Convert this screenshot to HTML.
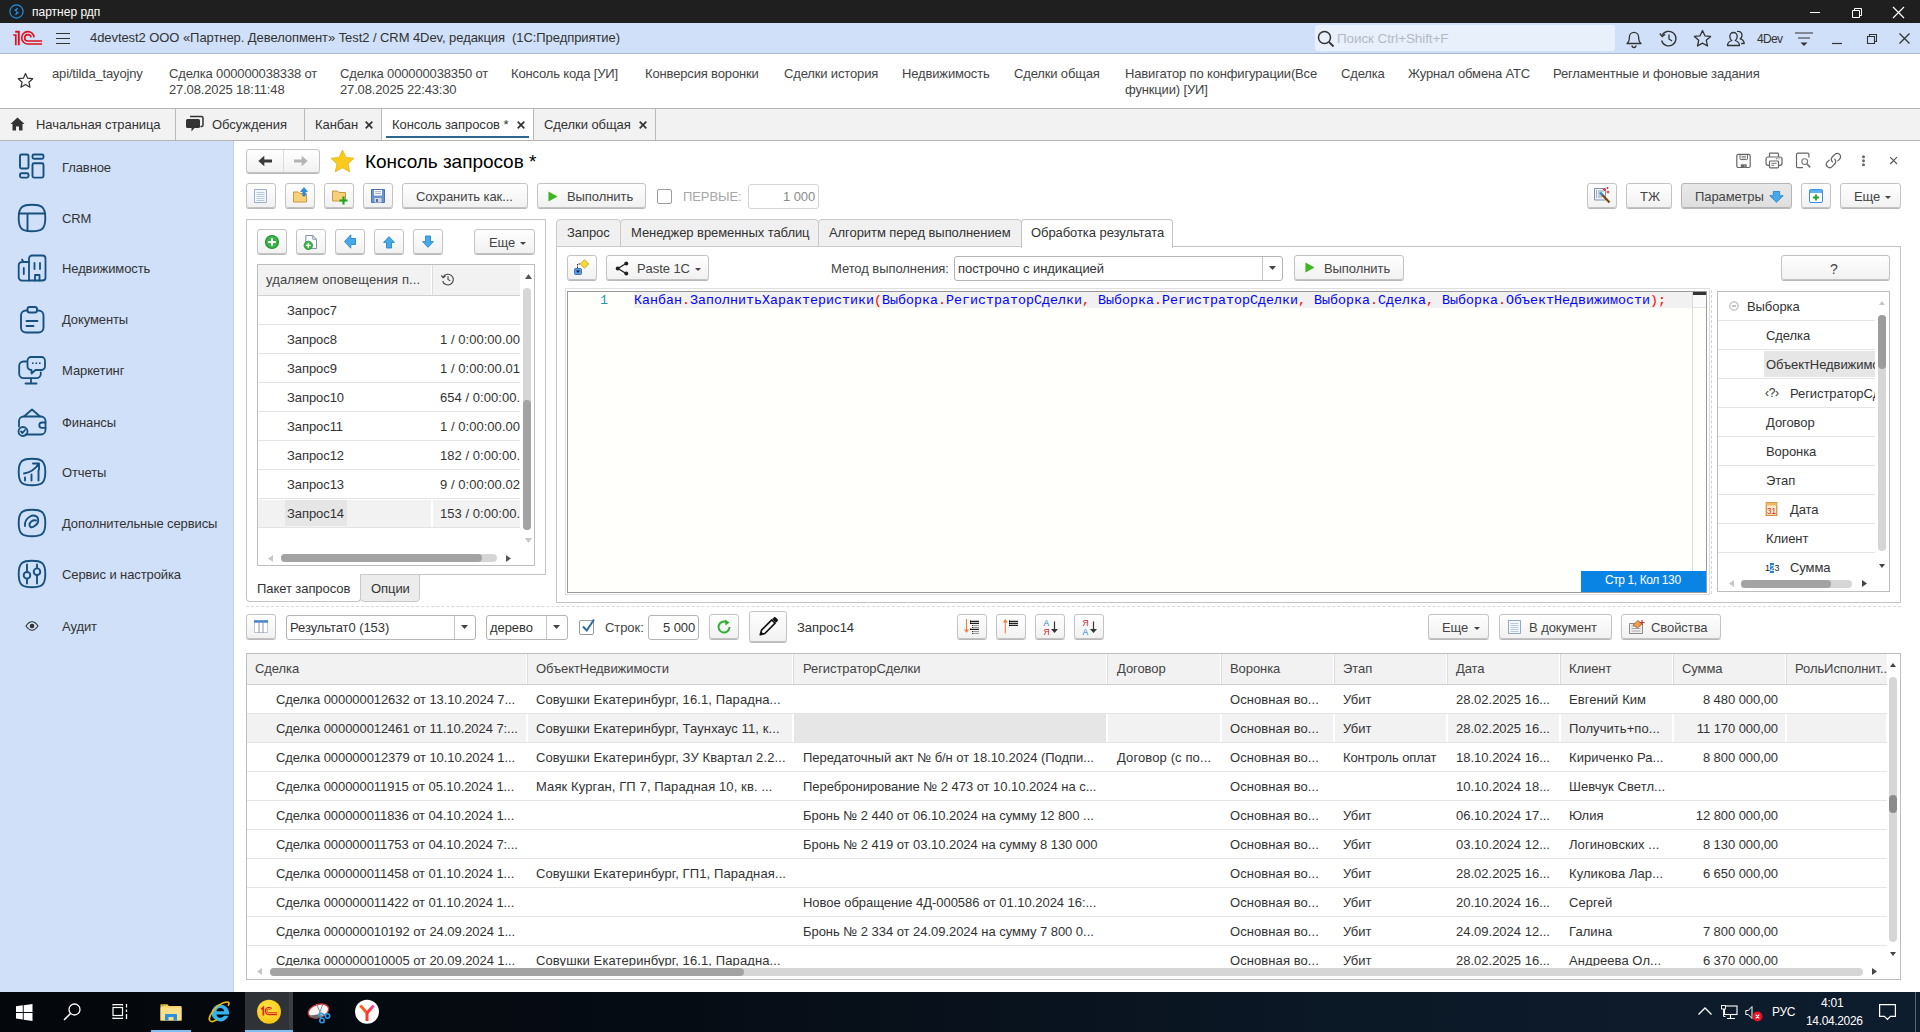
<!DOCTYPE html><html lang="ru"><head><meta charset="utf-8"><title>Консоль запросов</title><style>
*{box-sizing:border-box;margin:0;padding:0}
html,body{width:1920px;height:1032px;overflow:hidden;background:#fff}
body{font-family:"Liberation Sans",sans-serif;font-size:13px;color:#333;letter-spacing:-0.07px;position:relative}
.abs{position:absolute}
.t{position:absolute;white-space:pre;line-height:16px;margin-top:1px}
.btn{position:absolute;border:1px solid #c3c3c3;border-radius:3px;background:linear-gradient(#ffffff,#f1f1f1);box-shadow:0 1px 0 #b9b9b9;}
.btn .lbl{position:absolute;white-space:pre;line-height:16px;top:4px;color:#444}
.inp{position:absolute;border:1px solid #b8b8b8;border-radius:2px;background:#fff}
svg{position:absolute;overflow:visible}
.hl{position:absolute;height:1px;background:#e6e6e6}
.vl{position:absolute;width:1px;background:#d9d9d9}
</style></head><body>
<div class="abs" style="left:0px;top:0px;width:1920px;height:23px;background:#1f1f1f"></div>
<svg style="left:9px;top:4px" width="15" height="15" viewBox="0 0 15 15"><circle cx="7.5" cy="7.5" r="6.6" fill="none" stroke="#1e90e8" stroke-width="1.2"/><path d="M8.6 4.2 L6.2 6.3 L8.2 7 M6.4 10.8 L8.8 8.7 L6.8 8" fill="none" stroke="#1e90e8" stroke-width="1.3"/></svg>
<div class="t " style="left:32px;top:3px;color:#fff;font-size:12px;letter-spacing:0">партнер рдп</div>
<svg style="left:1809px;top:6px" width="100" height="14" viewBox="0 0 100 14"><path d="M1 6.5h10" stroke="#fff" stroke-width="1" fill="none"/><path d="M43.5 4.5h7v7h-7z M45.5 4.5v-2h7v7h-2" stroke="#fff" stroke-width="1" fill="none"/><path d="M84 1l11 11M95 1l-11 11" stroke="#fff" stroke-width="1.2" fill="none"/></svg>
<div class="abs" style="left:0px;top:23px;width:1920px;height:30px;background:#cfe0f8"></div>
<div class="abs" style="left:0px;top:53px;width:1920px;height:1px;background:#a9b9d0"></div>
<svg style="left:12px;top:30px" width="31" height="16" viewBox="0 0 31 16"><g fill="none" stroke="#e0111b"><path d="M1.200 5H3.800V15.200" stroke-width="1.700"/><path d="M3.200 1.700H6.800V15.200" stroke-width="1.900"/><path d="M22.100 7.400A6.200 6.200 0 1 0 15.900 14H30.100" stroke-width="1.600"/><path d="M19.100 7.400A3.200 3.200 0 1 0 15.900 11H30.100" stroke-width="1.600"/></g></svg>
<svg style="left:56px;top:32px" width="14" height="13" viewBox="0 0 14 13"><path d="M0 1.5h14M0 6.5h14M0 11.5h14" stroke="#333" stroke-width="1.2"/></svg>
<div class="t " style="left:90px;top:29px;color:#333">4devtest2 ООО «Партнер. Девелопмент» Test2 / CRM 4Dev, редакция  (1С:Предприятие)</div>
<div class="abs" style="left:1315px;top:25px;width:300px;height:26px;background:#e8f0fc;border-radius:3px"></div>
<svg style="left:1317px;top:30px" width="18" height="18" viewBox="0 0 18 18"><circle cx="7.5" cy="7.5" r="6" fill="none" stroke="#333" stroke-width="1.5"/><path d="M12 12l4.5 4.5" stroke="#333" stroke-width="1.8"/></svg>
<div class="t " style="left:1337px;top:30px;color:#b4bac4;font-size:13.500px;letter-spacing:-0.1px">Поиск Ctrl+Shift+F</div>
<svg style="left:1625px;top:29px" width="18" height="20" viewBox="0 0 18 20"><path d="M2 14.5c2-1.5 2.4-3.5 2.4-6.5a4.6 4.6 0 0 1 9.2 0c0 3 .4 5 2.400 6.500z" fill="none" stroke="#333" stroke-width="1.3" stroke-linejoin="round"/><path d="M7 16.5a2 2 0 0 0 4 0" fill="none" stroke="#333" stroke-width="1.3"/></svg>
<svg style="left:1659px;top:29px" width="19" height="19" viewBox="0 0 19 19"><path d="M3.2 6.200A7.3 7.3 0 1 1 2.600 11.500" fill="none" stroke="#333" stroke-width="1.3"/><path d="M0.800 4.500l2.400 3 3-2.300" fill="none" stroke="#333" stroke-width="1.3"/><path d="M10 5.500v4.500l3 2" fill="none" stroke="#333" stroke-width="1.3"/></svg>
<svg style="left:1693px;top:29px" width="19" height="19" viewBox="0 0 19 19"><path d="M9.5 1.500l2.400 5.300 5.700.6-4.300 3.900 1.200 5.700-5-2.900-5 2.900 1.200-5.700L1.400 7.400l5.700-.6z" fill="none" stroke="#333" stroke-width="1.3" stroke-linejoin="round"/></svg>
<svg style="left:1726px;top:29px" width="20" height="19" viewBox="0 0 20 19"><path d="M1.500 16.500c0-3 2-4.300 4.300-5-1.600-1-2-2.400-2-4 0-2.300 1.500-4 3.700-4s3.700 1.700 3.700 4c0 1.600-.4 3-2 4 2.300.7 4.300 2 4.300 5z" fill="none" stroke="#333" stroke-width="1.3" stroke-linejoin="round"/><path d="M11 2.500c2.600-.8 5 .8 5 3.700 0 1.600-.6 2.800-1.800 3.600 2.200.6 4 1.800 4 4.700h-3" fill="none" stroke="#333" stroke-width="1.3" stroke-linejoin="round"/></svg>
<div class="t " style="left:1757px;top:30px;color:#333;font-size:12px;letter-spacing:-0.700px">4Dev</div>
<svg style="left:1795px;top:32px" width="18" height="14" viewBox="0 0 18 14"><path d="M0 1h18M3 6h12" stroke="#333" stroke-width="1.2"/><path d="M5.500 10.500h7l-3.500 3.500z" fill="#333"/></svg>
<svg style="left:1830px;top:30px" width="82" height="18" viewBox="0 0 82 18"><path d="M2 13.500h10" stroke="#333" stroke-width="1.200"/><path d="M37.500 6.500h7v7h-7z M39.500 6.500v-2h7v7h-2" stroke="#333" stroke-width="1.100" fill="none"/><path d="M69.500 3.500l10 10M79.500 3.500l-10 10" stroke="#333" stroke-width="1.300"/></svg>
<div class="abs" style="left:0px;top:54px;width:1920px;height:54px;background:#fff"></div>
<div class="abs" style="left:0px;top:108px;width:1920px;height:1px;background:#b4b4b4"></div>
<svg style="left:17px;top:72px" width="17" height="17" viewBox="0 0 17 17"><path d="M8.500 1.500l2.100 4.700 5.100.5-3.800 3.500 1.100 5-4.500-2.600-4.500 2.600 1.100-5L1.300 6.700l5.100-.5z" fill="none" stroke="#333" stroke-width="1.200" stroke-linejoin="round"/></svg>
<div class="t " style="left:52px;top:65px;color:#444;letter-spacing:-0.150px">api/tilda_tayojny</div>
<div class="t " style="left:169px;top:65px;color:#444;letter-spacing:-0.150px">Сделка 000000038338 от</div>
<div class="t " style="left:169px;top:81px;color:#444;letter-spacing:-0.150px">27.08.2025 18:11:48</div>
<div class="t " style="left:340px;top:65px;color:#444;letter-spacing:-0.150px">Сделка 000000038350 от</div>
<div class="t " style="left:340px;top:81px;color:#444;letter-spacing:-0.150px">27.08.2025 22:43:30</div>
<div class="t " style="left:511px;top:65px;color:#444;letter-spacing:-0.150px">Консоль кода [УИ]</div>
<div class="t " style="left:645px;top:65px;color:#444;letter-spacing:-0.150px">Конверсия воронки</div>
<div class="t " style="left:784px;top:65px;color:#444;letter-spacing:-0.150px">Сделки история</div>
<div class="t " style="left:902px;top:65px;color:#444;letter-spacing:-0.150px">Недвижимость</div>
<div class="t " style="left:1014px;top:65px;color:#444;letter-spacing:-0.150px">Сделки общая</div>
<div class="t " style="left:1125px;top:65px;color:#444;letter-spacing:-0.150px">Навигатор по конфигурации(Все</div>
<div class="t " style="left:1125px;top:81px;color:#444;letter-spacing:-0.150px">функции) [УИ]</div>
<div class="t " style="left:1341px;top:65px;color:#444;letter-spacing:-0.150px">Сделка</div>
<div class="t " style="left:1408px;top:65px;color:#444;letter-spacing:-0.150px">Журнал обмена АТС</div>
<div class="t " style="left:1553px;top:65px;color:#444;letter-spacing:-0.150px">Регламентные и фоновые задания</div>
<div class="abs" style="left:0px;top:109px;width:1920px;height:31px;background:#f2f2f2"></div>
<div class="abs" style="left:0px;top:140px;width:1920px;height:1px;background:#b4b4b4"></div>
<div class="abs" style="left:382px;top:109px;width:151px;height:31px;background:#fff"></div>
<div class="abs" style="left:386px;top:136px;width:143px;height:2px;background:#2e6694"></div>
<div class="abs" style="left:175px;top:109px;width:1px;height:31px;background:#b9b9b9"></div>
<div class="abs" style="left:304px;top:109px;width:1px;height:31px;background:#b9b9b9"></div>
<div class="abs" style="left:381px;top:109px;width:1px;height:31px;background:#b9b9b9"></div>
<div class="abs" style="left:533px;top:109px;width:1px;height:31px;background:#b9b9b9"></div>
<div class="abs" style="left:655px;top:109px;width:1px;height:31px;background:#b9b9b9"></div>
<svg style="left:10px;top:117px" width="15" height="14" viewBox="0 0 15 14"><path d="M7.500 0.500L0.500 7h2v6.500h3.500v-4h3v4h3.500V7h2z" fill="#333"/></svg>
<div class="t " style="left:36px;top:116px;color:#333">Начальная страница</div>
<svg style="left:186px;top:116px" width="17" height="16" viewBox="0 0 17 16"><path d="M4 0.500h11.500a1.500 1.500 0 0 1 1.500 1.500v7a1.500 1.500 0 0 1-1.500 1.500h-1" fill="none" stroke="#333" stroke-width="1.500"/><path d="M1.500 3h11a1.500 1.500 0 0 1 1.500 1.500v6a1.500 1.500 0 0 1-1.500 1.500h-4l-3 3.500v-3.500h-4a1.500 1.500 0 0 1-1.500-1.500v-6a1.500 1.500 0 0 1 1.500-1.500z" fill="#333"/></svg>
<div class="t " style="left:212px;top:116px;color:#333">Обсуждения</div>
<div class="t " style="left:315px;top:116px;color:#333">Канбан</div>
<div class="t " style="left:392px;top:116px;color:#333">Консоль запросов *</div>
<div class="t " style="left:544px;top:116px;color:#333">Сделки общая</div>
<svg style="left:365px;top:121px" width="8" height="8" viewBox="0 0 8 8"><path d="M0.700 0.700l6.600 6.600M7.300 0.700l-6.600 6.600" stroke="#333" stroke-width="1.700"/></svg>
<svg style="left:517px;top:121px" width="8" height="8" viewBox="0 0 8 8"><path d="M0.700 0.700l6.600 6.600M7.300 0.700l-6.600 6.600" stroke="#333" stroke-width="1.700"/></svg>
<svg style="left:639px;top:121px" width="8" height="8" viewBox="0 0 8 8"><path d="M0.700 0.700l6.600 6.600M7.300 0.700l-6.600 6.600" stroke="#333" stroke-width="1.700"/></svg>
<div class="abs" style="left:0px;top:141px;width:233px;height:851px;background:#cfe0f8"></div>
<div class="abs" style="left:233px;top:141px;width:1px;height:851px;background:#c5d3e6"></div>
<div class="t " style="left:62px;top:159px;color:#333;letter-spacing:-0.1px">Главное</div>
<div class="t " style="left:62px;top:210px;color:#333;letter-spacing:-0.1px">CRM</div>
<div class="t " style="left:62px;top:260px;color:#333;letter-spacing:-0.1px">Недвижимость</div>
<div class="t " style="left:62px;top:311px;color:#333;letter-spacing:-0.1px">Документы</div>
<div class="t " style="left:62px;top:362px;color:#333;letter-spacing:-0.1px">Маркетинг</div>
<div class="t " style="left:62px;top:414px;color:#333;letter-spacing:-0.1px">Финансы</div>
<div class="t " style="left:62px;top:464px;color:#333;letter-spacing:-0.1px">Отчеты</div>
<div class="t " style="left:62px;top:515px;color:#333;letter-spacing:-0.1px">Дополнительные сервисы</div>
<div class="t " style="left:62px;top:566px;color:#333;letter-spacing:-0.1px">Сервис и настройка</div>
<div class="t " style="left:62px;top:618px;color:#333;letter-spacing:-0.1px">Аудит</div>
<svg style="left:17px;top:151px" width="30" height="30" viewBox="0 0 30 30"><g fill="none" stroke="#17507f" stroke-width="1.9" stroke-linecap="round" stroke-linejoin="round"><rect x="3" y="3.500" width="8.500" height="14" rx="1.500"/><rect x="15.500" y="3.500" width="11" height="4.300" rx="1.500"/><rect x="3" y="22.300" width="8.500" height="4.300" rx="1.500"/><rect x="15.500" y="12.300" width="11" height="14.300" rx="1.500"/></g></svg>
<svg style="left:17px;top:203px" width="30" height="30" viewBox="0 0 30 30"><g fill="none" stroke="#17507f" stroke-width="1.9" stroke-linecap="round" stroke-linejoin="round"><path d="M15 1.700c9 0 13.300 1.500 13.300 13.300S24 28.300 15 28.300 1.700 26.800 1.700 15 6 1.700 15 1.700z"/><path d="M2 10.500h26M10.500 10.500v17.500"/></g></svg>
<svg style="left:17px;top:253px" width="30" height="30" viewBox="0 0 30 30"><g fill="none" stroke="#17507f" stroke-width="1.8" stroke-linecap="round" stroke-linejoin="round"><path d="M12 27.500V5.500a3 3 0 0 1 3-3h10.500a3 3 0 0 1 3 3v19a3 3 0 0 1-3 3z"/><path d="M12 9H6.500L5 6.500M12 9H5a3.300 3.300 0 0 0-3.300 3.300v12a3.300 3.300 0 0 0 3.300 3.300h7"/><path d="M6.800 15v6M17.500 10v6M23 10v6M18 27.500v-5.500h4.500v5.500"/></g></svg>
<svg style="left:17px;top:305px" width="30" height="30" viewBox="0 0 30 30"><g fill="none" stroke="#17507f" stroke-width="1.9" stroke-linecap="round" stroke-linejoin="round"><path d="M10.500 5.500H9a5 5 0 0 0-5 5v12a5 5 0 0 0 5 5h12.500a5 5 0 0 0 5-5v-12a5 5 0 0 0-5-5H20"/><rect x="10.500" y="2" width="9.500" height="5.500" rx="2"/><path d="M9.500 16h11M9.500 21h7"/></g></svg>
<svg style="left:17px;top:355px" width="30" height="30" viewBox="0 0 30 30"><g fill="none" stroke="#17507f" stroke-width="1.8" stroke-linecap="round" stroke-linejoin="round"><path d="M9.500 6.500H6.500a4.300 4.300 0 0 0-4.300 4.300v8a4.300 4.300 0 0 0 4.300 4.300h13a4.300 4.300 0 0 0 4.300-4.300v-1.500"/><path d="M14 23.500v5M8.500 28.500h11"/><path d="M14 2h10.500a3.500 3.500 0 0 1 3.500 3.500v6a3.500 3.500 0 0 1-3.500 3.500h-6l-4 3.500v-3.500h-.500a3.500 3.500 0 0 1-3.500-3.500v-6A3.500 3.500 0 0 1 14 2z"/></g></svg>
<svg style="left:17px;top:355px" width="30" height="30" viewBox="0 0 30 30"><circle cx="15.800" cy="8.200" r="0.900" fill="#17507f"/><circle cx="19.300" cy="8.200" r="0.900" fill="#17507f"/><circle cx="22.800" cy="8.200" r="0.900" fill="#17507f"/></svg>
<svg style="left:17px;top:407px" width="30" height="30" viewBox="0 0 30 30"><g fill="none" stroke="#17507f" stroke-width="1.8" stroke-linecap="round" stroke-linejoin="round"><path d="M8.500 27.500H24a4.500 4.500 0 0 0 4.500-4.500V14a4.500 4.500 0 0 0-4.500-4.500H6.500a4.500 4.500 0 0 0-4.500 4.500v5.500"/><path d="M7 9.500l8-7 8 7"/><path d="M28.500 15.500h-3.500a2.700 2.700 0 0 0 0 5.400h3.500"/><circle cx="6" cy="24.500" r="4.500"/><path d="M4 24.500l1.500 1.500 2.500-3"/></g></svg>
<svg style="left:17px;top:457px" width="30" height="30" viewBox="0 0 30 30"><g fill="none" stroke="#17507f" stroke-width="1.9" stroke-linecap="round" stroke-linejoin="round"><path d="M15 1.700c9 0 13.300 1.500 13.300 13.300S24 28.300 15 28.300 1.700 26.800 1.700 15 6 1.700 15 1.700z"/><path d="M8 23.500v-3M14.500 23.500v-6M21.500 23.500v-10"/><path d="M7 16.500c6-1 11-4 14.500-9.500M16 6.500h6v6"/></g></svg>
<svg style="left:17px;top:508px" width="30" height="30" viewBox="0 0 30 30"><g fill="none" stroke="#17507f" stroke-width="1.9" stroke-linecap="round" stroke-linejoin="round"><path d="M15 1.700c9 0 13.300 1.500 13.300 13.300S24 28.300 15 28.300 1.700 26.800 1.700 15 6 1.700 15 1.700z"/><path d="M19 12.500c-3-1-6.500 1.500-6.500 4.500 0 2 2 2.800 3.500 2 3.500-1.800 6-5 5-8.500-.8-3-5-3.800-8-2-3.500 2.200-5.500 6-5 9.500"/></g></svg>
<svg style="left:17px;top:559px" width="30" height="30" viewBox="0 0 30 30"><g fill="none" stroke="#17507f" stroke-width="1.9" stroke-linecap="round" stroke-linejoin="round"><path d="M15 1.700c9 0 13.300 1.500 13.300 13.300S24 28.300 15 28.300 1.700 26.800 1.700 15 6 1.700 15 1.700z"/><path d="M10 5.500v7M10 20v4.500M20 5.500v3M20 16.500v8"/><circle cx="10" cy="16.300" r="3.300"/><circle cx="20" cy="12.700" r="3.300"/></g></svg>
<svg style="left:25px;top:620px" width="14" height="12" viewBox="0 0 14 12"><path d="M1 6c2-3 4-4.200 6-4.200s4 1.200 6 4.200c-2 3-4 4.200-6 4.200s-4-1.200-6-4.200z" fill="none" stroke="#333" stroke-width="1.100"/><circle cx="7" cy="6" r="2.300" fill="#333"/></svg>
<div class="btn" style="left:246px;top:149px;width:74px;height:24px;"></div>
<div class="abs" style="left:283px;top:150px;width:1px;height:22px;background:#dcdcdc"></div>
<svg style="left:258px;top:155px" width="14" height="12" viewBox="0 0 14 12"><path d="M0.300 6L6.300 0.800V4.500H14V7.500H6.300V11.200z" fill="#3a3a3a"/></svg>
<svg style="left:294px;top:155px" width="14" height="12" viewBox="0 0 14 12"><path d="M13.700 6L7.700 0.800V4.500H0V7.500H7.700V11.200z" fill="#b4b4b4"/></svg>
<svg style="left:330px;top:149px" width="25" height="24" viewBox="0 0 25 24"><path d="M12.500 1l3.400 7.400 8.100.9-6 5.500 1.700 8-7.200-4.100-7.200 4.100 1.700-8-6-5.500 8.100-.9z" fill="#fcca1b" stroke="#e9ae10" stroke-width="0.800" stroke-linejoin="round"/></svg>
<div class="t " style="left:365px;top:150px;font-size:19px;line-height:22px;color:#000;letter-spacing:-0.040px">Консоль запросов *</div>
<svg style="left:1736px;top:153px" width="16" height="16" viewBox="0 0 16 16"><g fill="none" stroke="#666" stroke-width="1.200"><rect x="0.800" y="1.300" width="13.400" height="13.200" rx="1.500"/><path d="M4 1.500v4.300a0.800 0.800 0 0 0 0.800 0.800h5.900a0.800 0.800 0 0 0 0.800-0.800v-4.300" stroke-width="1"/><path d="M5.500 3.300h4.500M5.500 4.900h4.500" stroke-width="0.800"/></g><rect x="4.800" y="11.300" width="5.900" height="3.200" fill="#666"/><rect x="8" y="11.800" width="1.800" height="2.700" fill="#888"/></svg>
<svg style="left:1765px;top:152px" width="18" height="17" viewBox="0 0 18 17"><g fill="none" stroke="#666" stroke-width="1.200"><path d="M4.500 5V1.800a0.600 0.600 0 0 1 0.600-0.600h7.800a0.600 0.600 0 0 1 0.600 0.600V5"/><path d="M4.500 13.300H3a2 2 0 0 1-2-2V7a2 2 0 0 1 2-2h12a2 2 0 0 1 2 2v4.300a2 2 0 0 1-2 2h-1.500"/><rect x="4.500" y="9" width="9" height="6.800" rx="0.800" fill="#fff"/><path d="M6.300 11.300h5.400M6.300 13.300h3" stroke-width="0.900"/><path d="M11 6.700h1.500M13.500 6.700h1" stroke-width="0.900"/></g></svg>
<svg style="left:1795px;top:152px" width="17" height="17" viewBox="0 0 17 17"><g fill="none" stroke="#666" stroke-width="1.200"><path d="M8 15.700H2.700a1.200 1.200 0 0 1-1.200-1.200V2.400a1.200 1.200 0 0 1 1.200-1.200h10a1.200 1.200 0 0 1 1.200 1.200V5.500"/><circle cx="9.700" cy="9.600" r="2.900" stroke="#777" stroke-width="1.100"/><path d="M11.900 11.900l3.300 3.500" stroke="#777" stroke-width="1.700"/></g></svg>
<svg style="left:1825px;top:152px" width="17" height="17" viewBox="0 0 17 17"><g fill="none" stroke="#666" stroke-width="1.300" stroke-linecap="round"><path d="M7.300 9.700a3.300 3.300 0 0 1 0-4.700l2.600-2.600a3.300 3.300 0 0 1 4.700 4.700l-1.800 1.800"/><path d="M9.700 7.300a3.300 3.300 0 0 1 0 4.700l-2.600 2.600a3.300 3.300 0 0 1-4.700-4.700l1.800-1.800"/></g></svg>
<svg style="left:1861px;top:155px" width="4" height="12" viewBox="0 0 4 12"><circle cx="2.500" cy="1.700" r="1.500" fill="#666"/><circle cx="2.500" cy="5.700" r="1.500" fill="#666"/><circle cx="2.500" cy="9.700" r="1.500" fill="#666"/></svg>
<svg style="left:1890px;top:157px" width="8" height="8" viewBox="0 0 8 8"><path d="M0.200 0.200l6.800 6.800M7 0.200l-6.800 6.800" stroke="#555" stroke-width="1.100"/></svg>
<div class="btn" style="left:246px;top:183px;width:30px;height:25px;"></div>
<svg style="left:254px;top:189px" width="13" height="14" viewBox="0 0 13 14"><path d="M0.500 0.500h12v13h-12z" fill="#f4f7fb" stroke="#9ab0c9" stroke-width="1"/><path d="M2.500 3.500h8M2.500 5.500h8M2.500 7.500h8M2.500 9.500h8M2.500 11.500h8" stroke="#a9bcd2" stroke-width="0.800"/></svg>
<div class="btn" style="left:285px;top:183px;width:30px;height:25px;"></div>
<svg style="left:293px;top:187px" width="15" height="16" viewBox="0 0 15 16"><path d="M0.500 5h5l1.500 1.500h6.500v8.500h-13z" fill="#f7d17a" stroke="#c99a3a" stroke-width="1"/><path d="M11 0.500l3.500 4h-2.300v4.500h-2.400v-4.500h-2.300z" fill="#2f8fe0" stroke="#1d6fc0" stroke-width="0.600"/></svg>
<div class="btn" style="left:324px;top:183px;width:30px;height:25px;"></div>
<svg style="left:332px;top:189px" width="16" height="16" viewBox="0 0 16 16"><path d="M0.500 2h5l1.500 1.500h6.500v8.500h-13z" fill="#f7d17a" stroke="#c99a3a" stroke-width="1"/><path d="M11.500 7.500v8M7.500 11.500h8" stroke="#1fa81f" stroke-width="2.200"/></svg>
<div class="btn" style="left:363px;top:183px;width:30px;height:25px;"></div>
<svg style="left:371px;top:189px" width="14" height="14" viewBox="0 0 14 14"><path d="M0.500 0.500h13v13h-13z" fill="#6b93d0" stroke="#4a73b3" stroke-width="1"/><rect x="3" y="1" width="8" height="5.500" fill="#fff"/><path d="M4 2.700h6M4 4.500h6" stroke="#7a9cc8" stroke-width="0.800"/><rect x="3.500" y="9" width="7" height="4.500" fill="#d4d8d6"/><rect x="5" y="10" width="2" height="3" fill="#4a73b3"/></svg>
<div class="btn" style="left:402px;top:183px;width:126px;height:25px;"><span class="lbl" style="left:13px;top:5px">Сохранить как...</span></div>
<div class="btn" style="left:537px;top:183px;width:109px;height:25px;"><span class="lbl" style="left:29px;top:5px">Выполнить</span><svg style="left:10px;top:7px" width="10" height="11" viewBox="0 0 12 13"><path d="M0.500 0.500l11 6-11 6z" fill="#3cb521"/></svg></div>
<div class="abs" style="left:657px;top:189px;width:15px;height:15px;border:1px solid #9c9c9c;border-radius:2px;background:#fff"></div>
<div class="t " style="left:683px;top:188px;color:#a8a8a8">ПЕРВЫЕ:</div>
<div class="abs" style="left:748px;top:184px;width:71px;height:25px;border:1px solid #d4d4d4;border-radius:3px;background:#fff"></div>
<div class="t " style="left:783px;top:188px;color:#8a8a8a">1 000</div>
<div class="btn" style="left:1587px;top:183px;width:30px;height:25px;"></div>
<svg style="left:1594px;top:187px" width="17" height="17" viewBox="0 0 17 17"><path d="M0.500 1.500h11v11.500h-11z" fill="#eef2f8" stroke="#7f93b0" stroke-width="1"/><path d="M2 4h1M2 6h1M2 8h1M2 10h1" stroke="#555" stroke-width="0.900"/><path d="M4 4h6M4 6h4M4 8h3M4 10h4" stroke="#8a97a8" stroke-width="0.900"/><path d="M7.500 7l8 8.500" stroke="#7a4a12" stroke-width="2.300"/><path d="M6 5.500l2.500 2.500" stroke="#2f8fe0" stroke-width="2.300"/><path d="M10.500 1v3M9 2.500h3M14 3.500v3M12.500 5h3M13.500 0v2M12.500 1h2" stroke="#e8302a" stroke-width="1.100"/></svg>
<div class="btn" style="left:1626px;top:183px;width:46px;height:25px;"><span class="lbl" style="left:13px;top:5px">ТЖ</span></div>
<div class="btn" style="left:1681px;top:183px;width:111px;height:25px;background:linear-gradient(#e9e9e9,#dedede);border-color:#b4b4b4;"><span class="lbl" style="left:13px;top:5px">Параметры</span><svg style="left:87px;top:7px" width="15" height="12" viewBox="0 0 15 12"><path d="M4.300 0.500h6.400v4.200h3.500l-6.700 6.600-6.700-6.600h3.500z" fill="#45a9ea" stroke="#2d86c8" stroke-width="0.900" stroke-linejoin="round"/></svg></div>
<div class="btn" style="left:1801px;top:183px;width:30px;height:25px;"></div>
<svg style="left:1809px;top:189px" width="14" height="14" viewBox="0 0 14 14"><rect x="0.500" y="0.500" width="13" height="13" rx="1.500" fill="#fff" stroke="#3a8fe0" stroke-width="1"/><path d="M0.500 3.500v-1.500a1.500 1.500 0 0 1 1.500-1.500h10a1.500 1.500 0 0 1 1.500 1.500v1.500z" fill="#5ab0f0" stroke="#3a8fe0" stroke-width="0.600"/><path d="M7 5.500v6M4 8.500h6" stroke="#1fa81f" stroke-width="1.800"/></svg>
<div class="btn" style="left:1840px;top:183px;width:61px;height:25px;"><span class="lbl" style="left:13px;top:5px">Еще</span><svg style="left:44px;top:12px" width="6" height="3" viewBox="0 0 6 3"><path d="M0 0h6l-3 3z" fill="#444"/></svg></div>
<div class="abs" style="left:246px;top:219px;width:300px;height:356px;border:1px solid #c4c4c4;border-bottom:none"></div>
<div class="abs" style="left:360px;top:574px;width:186px;height:1px;background:#c4c4c4"></div>
<div class="abs" style="left:246px;top:574px;width:115px;height:28px;border:1px solid #c4c4c4;border-top:none;border-radius:0 0 4px 4px;background:#fff"></div>
<div class="abs" style="left:360px;top:574px;width:60px;height:28px;border:1px solid #c9c9c9;border-radius:0 0 4px 4px;background:#ececec"></div>
<div class="t " style="left:257px;top:580px;color:#333">Пакет запросов</div>
<div class="t " style="left:371px;top:580px;color:#333">Опции</div>
<div class="btn" style="left:257px;top:229px;width:30px;height:25px;"></div>
<div class="btn" style="left:296px;top:229px;width:30px;height:25px;"></div>
<div class="btn" style="left:335px;top:229px;width:30px;height:25px;"></div>
<div class="btn" style="left:374px;top:229px;width:30px;height:25px;"></div>
<div class="btn" style="left:413px;top:229px;width:30px;height:25px;"></div>
<svg style="left:264px;top:234px" width="16" height="16" viewBox="0 0 16 16"><circle cx="8" cy="8" r="6.500" fill="#3db54a" stroke="#1f9232" stroke-width="1.200"/><path d="M8 4.200v7.600M4.200 8h7.600" stroke="#fff" stroke-width="2"/></svg>
<svg style="left:303px;top:234px" width="15" height="16" viewBox="0 0 15 16"><path d="M2.800 1.500h7l3.700 3.700v9.300h-10.700z" fill="#fff" stroke="#7f8fa6" stroke-width="1"/><path d="M9.800 1.500v3.700h3.700" fill="none" stroke="#7f8fa6" stroke-width="1"/><circle cx="5.300" cy="11.400" r="4.200" fill="#3db54a" stroke="#1f9232" stroke-width="0.800"/><path d="M5.300 9v4.800M2.900 11.400h4.800" stroke="#fff" stroke-width="1.400"/></svg>
<svg style="left:344px;top:234px" width="13" height="15" viewBox="0 0 13 15"><path d="M6.800 0.800v3.700h4.700v6h-4.700v3.700l-6.300-6.700z" fill="#45a9ea" stroke="#2d86c8" stroke-width="0.900" stroke-linejoin="round"/></svg>
<svg style="left:383px;top:236px" width="12" height="13" viewBox="0 0 12 13"><path d="M6 0.600l5.400 5.800h-2.900v5.600h-5v-5.600h-2.900z" fill="#45a9ea" stroke="#2d86c8" stroke-width="0.900" stroke-linejoin="round"/></svg>
<svg style="left:422px;top:235px" width="12" height="13" viewBox="0 0 12 13"><path d="M6 12.400l5.400-5.800h-2.900v-5.600h-5v5.600h-2.900z" fill="#45a9ea" stroke="#2d86c8" stroke-width="0.900" stroke-linejoin="round"/></svg>
<div class="btn" style="left:474px;top:229px;width:61px;height:25px;"><span class="lbl" style="left:14px;top:5px">Еще</span><svg style="left:45px;top:12px" width="6" height="3" viewBox="0 0 6 3"><path d="M0 0h6l-3 3z" fill="#444"/></svg></div>
<div class="abs" style="left:257px;top:264px;width:278px;height:302px;border:1px solid #bdbdbd;background:#fff"></div>
<div class="abs" style="left:258px;top:265px;width:262px;height:30px;background:#f2f2f2"></div>
<div class="abs" style="left:431px;top:265px;width:1px;height:30px;background:#fff"></div>
<div class="abs" style="left:432px;top:265px;width:1px;height:30px;background:#dcdcdc"></div>
<div class="abs" style="left:258px;top:295px;width:262px;height:1px;background:#d0d0d0"></div>
<div class="t " style="left:266px;top:271px;color:#444;letter-spacing:0.12px">удаляем оповещения п...</div>
<svg style="left:440px;top:272px" width="15" height="14" viewBox="0 0 15 14"><path d="M3.300 4.800A5.400 5.400 0 1 1 2.700 9" fill="none" stroke="#444" stroke-width="1.100"/><path d="M1.300 3.300l1.800 2.400 2.400-1.700" fill="none" stroke="#444" stroke-width="1.100"/><path d="M8 4.200v3.300l2.300 1.400" fill="none" stroke="#444" stroke-width="1.100"/></svg>
<div class="t " style="left:287px;top:302px;color:#333">Запрос7</div>
<div class="abs" style="left:258px;top:324px;width:262px;height:1px;background:#e4e4e4"></div>
<div class="t " style="left:287px;top:331px;color:#333">Запрос8</div>
<div class="t " style="left:440px;top:331px;color:#333;letter-spacing:0.04px">1 / 0:00:00.00</div>
<div class="abs" style="left:258px;top:353px;width:262px;height:1px;background:#e4e4e4"></div>
<div class="t " style="left:287px;top:360px;color:#333">Запрос9</div>
<div class="t " style="left:440px;top:360px;color:#333;letter-spacing:0.04px">1 / 0:00:00.01</div>
<div class="abs" style="left:258px;top:382px;width:262px;height:1px;background:#e4e4e4"></div>
<div class="t " style="left:287px;top:389px;color:#333">Запрос10</div>
<div class="t " style="left:440px;top:389px;color:#333;letter-spacing:0.04px">654 / 0:00:00.</div>
<div class="abs" style="left:258px;top:411px;width:262px;height:1px;background:#e4e4e4"></div>
<div class="t " style="left:287px;top:418px;color:#333">Запрос11</div>
<div class="t " style="left:440px;top:418px;color:#333;letter-spacing:0.04px">1 / 0:00:00.00</div>
<div class="abs" style="left:258px;top:440px;width:262px;height:1px;background:#e4e4e4"></div>
<div class="t " style="left:287px;top:447px;color:#333">Запрос12</div>
<div class="t " style="left:440px;top:447px;color:#333;letter-spacing:0.04px">182 / 0:00:00.</div>
<div class="abs" style="left:258px;top:469px;width:262px;height:1px;background:#e4e4e4"></div>
<div class="t " style="left:287px;top:476px;color:#333">Запрос13</div>
<div class="t " style="left:440px;top:476px;color:#333;letter-spacing:0.04px">9 / 0:00:00.02</div>
<div class="abs" style="left:258px;top:498px;width:262px;height:1px;background:#e4e4e4"></div>
<div class="abs" style="left:258px;top:500px;width:173px;height:27px;background:#f2f2f2"></div>
<div class="abs" style="left:433px;top:500px;width:87px;height:27px;background:#f2f2f2"></div>
<div class="abs" style="left:285px;top:500px;width:62px;height:26px;background:#e6e6e6"></div>
<div class="t " style="left:287px;top:505px;color:#333">Запрос14</div>
<div class="t " style="left:440px;top:505px;color:#333;letter-spacing:0.04px">153 / 0:00:00.</div>
<div class="abs" style="left:258px;top:527px;width:262px;height:1px;background:#e4e4e4"></div>
<svg style="left:525px;top:274px" width="7" height="5" viewBox="0 0 7 5"><path d="M0 5h7l-3.500-5z" fill="#555"/></svg>
<div class="abs" style="left:523px;top:288px;width:8px;height:242px;background:#d6d6d6;border-radius:4px"></div>
<div class="abs" style="left:523px;top:400px;width:8px;height:130px;background:#a3a3a3;border-radius:4px"></div>
<svg style="left:525px;top:538px" width="7" height="5" viewBox="0 0 7 5"><path d="M0 0h7l-3.500 5z" fill="#c6c6c6"/></svg>
<svg style="left:268px;top:555px" width="5" height="7" viewBox="0 0 5 7"><path d="M5 0v7l-5-3.500z" fill="#c6c6c6"/></svg>
<div class="abs" style="left:281px;top:554px;width:216px;height:8px;background:#d6d6d6;border-radius:4px"></div>
<div class="abs" style="left:281px;top:554px;width:201px;height:8px;background:#a3a3a3;border-radius:4px"></div>
<svg style="left:506px;top:555px" width="5" height="7" viewBox="0 0 5 7"><path d="M0 0v7l5-3.500z" fill="#555"/></svg>
<div class="abs" style="left:556px;top:246px;width:1345px;height:357px;border:1px solid #c4c4c4;background:#fff"></div>
<div class="abs" style="left:556px;top:219px;width:65px;height:28px;border:1px solid #c9c9c9;border-radius:4px 4px 0 0;background:#f0f0f0"></div>
<div class="t " style="left:567px;top:224px;color:#333">Запрос</div>
<div class="abs" style="left:620px;top:219px;width:199px;height:28px;border:1px solid #c9c9c9;border-radius:4px 4px 0 0;background:#f0f0f0"></div>
<div class="t " style="left:631px;top:224px;color:#333">Менеджер временных таблиц</div>
<div class="abs" style="left:818px;top:219px;width:204px;height:28px;border:1px solid #c9c9c9;border-radius:4px 4px 0 0;background:#f0f0f0"></div>
<div class="t " style="left:829px;top:224px;color:#333">Алгоритм перед выполнением</div>
<div class="abs" style="left:1021px;top:219px;width:152px;height:29px;border:1px solid #c4c4c4;border-bottom:none;border-radius:4px 4px 0 0;background:#fff"></div>
<div class="t " style="left:1031px;top:224px;color:#333">Обработка результата</div>
<div class="btn" style="left:567px;top:255px;width:30px;height:25px;"></div>
<svg style="left:574px;top:259px" width="17" height="17" viewBox="0 0 17 17"><path d="M10.500 0.700l4.300 4.300-4.300 4.300-4.300-4.300z" fill="#f7d83a" stroke="#c9a01c" stroke-width="0.800"/><path d="M6 5h-2.500v4" fill="none" stroke="#333" stroke-width="1" stroke-dasharray="1.500 1"/><rect x="0.500" y="9.500" width="7" height="6" rx="1" fill="#5b9be0" stroke="#2f62a5" stroke-width="0.800"/><path d="M2 11.500h4l-2 2.500z" fill="#123"/></svg>
<div class="btn" style="left:606px;top:255px;width:103px;height:25px;"><span class="lbl" style="left:30px;top:5px">Paste 1C</span><svg style="left:8px;top:5px" width="14" height="15" viewBox="0 0 14 15"><path d="M11 2.500L3 7.500l8 5" fill="none" stroke="#222" stroke-width="1.300"/><circle cx="11.300" cy="2.500" r="2" fill="#222"/><circle cx="2.700" cy="7.500" r="2" fill="#222"/><circle cx="11.300" cy="12.500" r="2" fill="#222"/></svg><svg style="left:88px;top:12px" width="6" height="3" viewBox="0 0 6 3"><path d="M0 0h6l-3 3z" fill="#444"/></svg></div>
<div class="t " style="left:831px;top:260px;color:#444">Метод выполнения:</div>
<div class="abs" style="left:954px;top:256px;width:329px;height:25px;border:1px solid #b4b4b4;border-radius:3px;background:#fff"></div>
<div class="abs" style="left:1262px;top:257px;width:1px;height:23px;background:#c4c4c4"></div>
<svg style="left:1269px;top:266px" width="7" height="4" viewBox="0 0 7 4"><path d="M0 0h7l-3.500 4z" fill="#444"/></svg>
<div class="t " style="left:958px;top:260px;color:#333">построчно с индикацией</div>
<div class="btn" style="left:1294px;top:255px;width:110px;height:25px;"><span class="lbl" style="left:29px;top:5px">Выполнить</span><svg style="left:10px;top:6px" width="10" height="11" viewBox="0 0 12 13"><path d="M0.500 0.500l11 6-11 6z" fill="#3cb521"/></svg></div>
<div class="btn" style="left:1781px;top:255px;width:109px;height:25px;font-size:14px;color:#000"><span class="lbl" style="left:48px;top:5px">?</span></div>
<div class="abs" style="left:565px;top:288px;width:1145px;height:307px;border:1px solid #dedede;background:#fff"></div>
<div class="abs" style="left:567px;top:291px;width:1140px;height:302px;border:1px solid #9a9a9a;background:#fffffb"></div>
<div class="abs" style="left:634px;top:292px;width:1058px;height:16px;background:#f1f1f1"></div>
<div class="abs" style="left:1692px;top:292px;width:1px;height:300px;background:#dcdcdc"></div>
<div class="abs" style="left:1693px;top:292px;width:13px;height:3px;background:#333"></div>
<div class="abs" style="left:1693px;top:295px;width:13px;height:13px;background:#fafafa;border-bottom:1px solid #e4e4e4"></div>
<div class="t " style="left:600px;top:292px;font-family:'Liberation Mono',monospace;font-size:13.330px;color:#2b91af;letter-spacing:0">1</div>
<div class="t " style="left:634px;top:292px;font-family:'Liberation Mono',monospace;font-size:13.330px;letter-spacing:0"><span style="color:#0000ff">Канбан</span><span style="color:#ff0000">.</span><span style="color:#0000ff">ЗаполнитьХарактеристики</span><span style="color:#ff0000">(</span><span style="color:#0000ff">Выборка</span><span style="color:#ff0000">.</span><span style="color:#0000ff">РегистраторСделки</span><span style="color:#ff0000">,</span> <span style="color:#0000ff">Выборка</span><span style="color:#ff0000">.</span><span style="color:#0000ff">РегистраторСделки</span><span style="color:#ff0000">,</span> <span style="color:#0000ff">Выборка</span><span style="color:#ff0000">.</span><span style="color:#0000ff">Сделка</span><span style="color:#ff0000">,</span> <span style="color:#0000ff">Выборка</span><span style="color:#ff0000">.</span><span style="color:#0000ff">ОбъектНедвижимости</span><span style="color:#ff0000">)</span><span style="color:#ff0000">;</span></div>
<div class="abs" style="left:1581px;top:571px;width:125px;height:21px;background:#0a84e4"></div>
<div class="t " style="left:1605px;top:571px;color:#fff;font-size:12px;line-height:16px;letter-spacing:-0.400px">Стр 1, Кол 130</div>
<div class="abs" style="left:1711px;top:290px;width:0px;height:304px;border-left:1px dashed #d4d4d4"></div>
<div class="abs" style="left:1717px;top:291px;width:173px;height:301px;border:1px solid #bdbdbd;background:#fff"></div>
<div class="abs" style="left:1718px;top:292px;width:157px;height:287px;overflow:hidden">
<div class="t" style="left:29px;top:6px;color:#333">Выборка</div>
<div class="abs" style="left:0;top:28px;width:157px;height:1px;background:#e4e4e4"></div>
<div class="t" style="left:48px;top:35px;color:#333">Сделка</div>
<div class="abs" style="left:0;top:57px;width:157px;height:1px;background:#e4e4e4"></div>
<div class="abs" style="left:46px;top:59px;width:111px;height:26px;background:#e6e6e6"></div>
<div class="t" style="left:48px;top:64px;color:#333">ОбъектНедвижимо</div>
<div class="abs" style="left:0;top:86px;width:157px;height:1px;background:#e4e4e4"></div>
<div class="t" style="left:72px;top:93px;color:#333">РегистраторСд</div>
<div class="abs" style="left:0;top:115px;width:157px;height:1px;background:#e4e4e4"></div>
<div class="t" style="left:47px;top:92px;color:#333;font-size:12px;letter-spacing:-0.300px">‹?›</div>
<div class="t" style="left:48px;top:122px;color:#333">Договор</div>
<div class="abs" style="left:0;top:144px;width:157px;height:1px;background:#e4e4e4"></div>
<div class="t" style="left:48px;top:151px;color:#333">Воронка</div>
<div class="abs" style="left:0;top:173px;width:157px;height:1px;background:#e4e4e4"></div>
<div class="t" style="left:48px;top:180px;color:#333">Этап</div>
<div class="abs" style="left:0;top:202px;width:157px;height:1px;background:#e4e4e4"></div>
<div class="t" style="left:72px;top:209px;color:#333">Дата</div>
<div class="abs" style="left:0;top:231px;width:157px;height:1px;background:#e4e4e4"></div>
<svg style="left:47px;top:210px" width="13" height="14" viewBox="0 0 10 12"><rect x="0.500" y="0.500" width="9" height="11" fill="#fdeccc" stroke="#c98a3a" stroke-width="1"/><rect x="0.500" y="0.500" width="9" height="2.500" fill="#f0b860"/><text x="5" y="10" font-size="7" text-anchor="middle" fill="#d02020" font-family="Liberation Sans,sans-serif">31</text></svg>
<div class="t" style="left:48px;top:238px;color:#333">Клиент</div>
<div class="abs" style="left:0;top:260px;width:157px;height:1px;background:#e4e4e4"></div>
<div class="t" style="left:72px;top:267px;color:#333">Сумма</div>
<div class="abs" style="left:0;top:289px;width:157px;height:1px;background:#e4e4e4"></div>
<div class="t" style="left:47px;top:267px;color:#222;font-size:9px;letter-spacing:-0.300px">1<span style="background:#2a7fd8;color:#fff">2</span>3</div>
</div>
<svg style="left:1729px;top:301px" width="10" height="10" viewBox="0 0 10 10"><circle cx="5" cy="5" r="4.200" fill="#fff" stroke="#a8a8a8" stroke-width="1"/><path d="M2.800 5h4.400" stroke="#888" stroke-width="1"/></svg>
<svg style="left:1879px;top:301px" width="6" height="4" viewBox="0 0 6 4"><path d="M0 4h6l-3-4z" fill="#c6c6c6"/></svg>
<div class="abs" style="left:1878px;top:315px;width:8px;height:236px;background:#d6d6d6;border-radius:4px"></div>
<div class="abs" style="left:1878px;top:315px;width:8px;height:54px;background:#9c9c9c;border-radius:4px"></div>
<svg style="left:1879px;top:564px" width="6" height="4" viewBox="0 0 6 4"><path d="M0 0h6l-3 4z" fill="#444"/></svg>
<svg style="left:1729px;top:580px" width="5" height="7" viewBox="0 0 5 7"><path d="M5 0v7l-5-3.500z" fill="#c6c6c6"/></svg>
<div class="abs" style="left:1741px;top:580px;width:111px;height:8px;background:#d6d6d6;border-radius:4px"></div>
<div class="abs" style="left:1741px;top:580px;width:90px;height:8px;background:#a3a3a3;border-radius:4px"></div>
<svg style="left:1862px;top:580px" width="5" height="7" viewBox="0 0 5 7"><path d="M0 0v7l5-3.500z" fill="#444"/></svg>
<div class="abs" style="left:246px;top:606px;width:1655px;height:0px;border-top:1px dashed #d9d9d9"></div>
<div class="btn" style="left:246px;top:614px;width:30px;height:25px;"></div>
<svg style="left:254px;top:620px" width="14" height="13" viewBox="0 0 14 13"><path d="M0.500 0.500h13v12h-13z" fill="#fff" stroke="#8a97a8" stroke-width="1" stroke-dasharray="1 1"/><path d="M0 1.500h14" stroke="#4a86cf" stroke-width="2.500"/><path d="M5 2v11M9 2v11" stroke="#8a97a8" stroke-width="1"/></svg>
<div class="abs" style="left:286px;top:615px;width:190px;height:25px;border:1px solid #b4b4b4;border-radius:3px;background:#fff"></div>
<div class="abs" style="left:454px;top:616px;width:1px;height:23px;background:#c4c4c4"></div>
<svg style="left:461px;top:625px" width="7" height="4" viewBox="0 0 7 4"><path d="M0 0h7l-3.500 4z" fill="#444"/></svg>
<div class="t " style="left:290px;top:619px;color:#333">Результат0 (153)</div>
<div class="abs" style="left:486px;top:615px;width:82px;height:25px;border:1px solid #b4b4b4;border-radius:3px;background:#fff"></div>
<div class="abs" style="left:546px;top:616px;width:1px;height:23px;background:#c4c4c4"></div>
<svg style="left:553px;top:625px" width="7" height="4" viewBox="0 0 7 4"><path d="M0 0h7l-3.500 4z" fill="#444"/></svg>
<div class="t " style="left:490px;top:619px;color:#333">дерево</div>
<div class="abs" style="left:579px;top:620px;width:15px;height:15px;border:1px solid #9c9c9c;border-radius:2px;background:#fff"></div>
<svg style="left:581px;top:618px" width="15" height="15" viewBox="0 0 15 15"><path d="M2 8.500l3.800 4L13 1.500" fill="none" stroke="#2e6aa0" stroke-width="2"/></svg>
<div class="t " style="left:605px;top:619px;color:#444">Строк:</div>
<div class="abs" style="left:648px;top:615px;width:51px;height:25px;border:1px solid #b4b4b4;border-radius:3px;background:#fff"></div>
<div class="t " style="left:663px;top:619px;color:#333">5 000</div>
<div class="btn" style="left:709px;top:614px;width:30px;height:25px;"></div>
<svg style="left:716px;top:619px" width="16" height="16" viewBox="0 0 16 16"><path d="M13.500 8A5.500 5.500 0 1 1 11 3.400" fill="none" stroke="#2fae2f" stroke-width="2"/><path d="M9 0.500l4.500 3-4 3z" fill="#2fae2f"/></svg>
<div class="btn" style="left:749px;top:611px;width:38px;height:31px;"></div>
<svg style="left:757px;top:616px" width="22" height="22" viewBox="0 0 22 22"><path d="M3.300 18.700l1.200-4.500L14.800 3.900l3.300 3.300L7.800 17.500z" fill="#fff" stroke="#111" stroke-width="1.700" stroke-linejoin="round"/><path d="M15.800 2.900l1.100-1.100a1.200 1.200 0 0 1 1.700 0l1.600 1.600a1.200 1.200 0 0 1 0 1.700l-1.100 1.100z" fill="#111" stroke="#111" stroke-width="1"/><path d="M2.800 19.200l1.300-3.800 2.500 2.500z" fill="#111"/></svg>
<div class="t " style="left:797px;top:619px;color:#333">Запрос14</div>
<div class="btn" style="left:957px;top:614px;width:30px;height:25px;"></div>
<div class="btn" style="left:996px;top:614px;width:30px;height:25px;"></div>
<div class="btn" style="left:1035px;top:614px;width:30px;height:25px;"></div>
<div class="btn" style="left:1074px;top:614px;width:30px;height:25px;"></div>
<svg style="left:963px;top:618px" width="18" height="17" viewBox="0 0 18 17"><path d="M3.500 1v13" stroke="#f0803c" stroke-width="1.100"/><path d="M1 11.500h5l-2.500 3.500z" fill="#f0803c"/><path d="M7 3.300h9M7 5.300h9M7 11.400h9" stroke="#222" stroke-width="1.200"/><path d="M7 3.300h1M7 5.300h1M7 11.400h1" stroke="#000" stroke-width="1.400"/><path d="M9.500 7.600h6.500M9.500 9.500h6.500M9.500 13.500h6.500M9.500 15.400h6.500" stroke="#9a9a9a" stroke-width="1"/><path d="M9 7.600h1M9 9.500h1M9 13.500h1M9 15.400h1" stroke="#333" stroke-width="1"/></svg>
<svg style="left:1002px;top:618px" width="18" height="17" viewBox="0 0 18 17"><path d="M3.300 2v13.500" stroke="#f0803c" stroke-width="1.100"/><path d="M0.800 4.500h5l-2.500-3.500z" fill="#f0803c"/><path d="M7 3.300h9M7 5.300h9M7 7.400h9" stroke="#222" stroke-width="1.200"/><path d="M7 3.300h1M7 5.300h1M7 7.400h1" stroke="#000" stroke-width="1.400"/></svg>
<svg style="left:1043px;top:618px" width="20" height="18" viewBox="0 0 20 18"><text x="0.500" y="8" font-size="8.500" font-family="Liberation Sans,sans-serif" fill="#2a7fd0" letter-spacing="0">А</text><text x="0.500" y="17" font-size="8.500" font-family="Liberation Sans,sans-serif" fill="#c4262e" letter-spacing="0">Я</text><path d="M11.500 3.500v9" stroke="#333" stroke-width="1.200"/><path d="M8 11h7l-3.500 4z" fill="#333"/></svg>
<svg style="left:1082px;top:618px" width="20" height="18" viewBox="0 0 20 18"><text x="0.500" y="8" font-size="8.500" font-family="Liberation Sans,sans-serif" fill="#c4262e" letter-spacing="0">Я</text><text x="0.500" y="17" font-size="8.500" font-family="Liberation Sans,sans-serif" fill="#2a7fd0" letter-spacing="0">А</text><path d="M11.500 3.500v9" stroke="#333" stroke-width="1.200"/><path d="M8 11h7l-3.500 4z" fill="#333"/></svg>
<div class="btn" style="left:1428px;top:614px;width:61px;height:25px;"><span class="lbl" style="left:13px;top:5px">Еще</span><svg style="left:45px;top:12px" width="6" height="3" viewBox="0 0 6 3"><path d="M0 0h6l-3 3z" fill="#444"/></svg></div>
<div class="btn" style="left:1499px;top:614px;width:113px;height:25px;"><span class="lbl" style="left:29px;top:5px">В документ</span><svg style="left:8px;top:5px" width="13" height="14" viewBox="0 0 13 14"><path d="M0.500 0.500h12v13h-12z" fill="#f4f7fb" stroke="#8fa8c6" stroke-width="1"/><path d="M2.500 3.500h8M2.500 5.500h8M2.500 7.500h8M2.500 9.500h8M2.500 11.500h8" stroke="#a9bcd2" stroke-width="0.800"/></svg></div>
<div class="btn" style="left:1621px;top:614px;width:100px;height:25px;"><span class="lbl" style="left:29px;top:5px">Свойства</span><svg style="left:7px;top:4px" width="17" height="16" viewBox="0 0 17 16"><path d="M0.500 4.500h13v10h-13z" fill="#eee" stroke="#8a8a8a" stroke-width="1"/><path d="M2.500 7h9M2.500 9.500h9M2.500 12h9" stroke="#9a9a9a" stroke-width="0.800"/><path d="M4 6l5-4.500 4 3.500-4.500 4z" fill="#e9a050" stroke="#a8601c" stroke-width="0.800"/><path d="M13 1v5M10.500 3.500h5" stroke="#d03030" stroke-width="1.200"/></svg></div>
<div class="abs" style="left:246px;top:653px;width:1655px;height:327px;border:1px solid #bdbdbd;background:#fff"></div>
<div class="abs" style="left:247px;top:654px;width:1640px;height:30px;background:#f2f2f2"></div>
<div class="abs" style="left:247px;top:684px;width:1640px;height:1px;background:#d0d0d0"></div>
<div class="abs" style="left:526px;top:654px;width:1px;height:30px;background:#fff"></div>
<div class="abs" style="left:527px;top:654px;width:1px;height:30px;background:#dcdcdc"></div>
<div class="abs" style="left:792px;top:654px;width:1px;height:30px;background:#fff"></div>
<div class="abs" style="left:793px;top:654px;width:1px;height:30px;background:#dcdcdc"></div>
<div class="abs" style="left:1106px;top:654px;width:1px;height:30px;background:#fff"></div>
<div class="abs" style="left:1107px;top:654px;width:1px;height:30px;background:#dcdcdc"></div>
<div class="abs" style="left:1220px;top:654px;width:1px;height:30px;background:#fff"></div>
<div class="abs" style="left:1221px;top:654px;width:1px;height:30px;background:#dcdcdc"></div>
<div class="abs" style="left:1333px;top:654px;width:1px;height:30px;background:#fff"></div>
<div class="abs" style="left:1334px;top:654px;width:1px;height:30px;background:#dcdcdc"></div>
<div class="abs" style="left:1446px;top:654px;width:1px;height:30px;background:#fff"></div>
<div class="abs" style="left:1447px;top:654px;width:1px;height:30px;background:#dcdcdc"></div>
<div class="abs" style="left:1559px;top:654px;width:1px;height:30px;background:#fff"></div>
<div class="abs" style="left:1560px;top:654px;width:1px;height:30px;background:#dcdcdc"></div>
<div class="abs" style="left:1672px;top:654px;width:1px;height:30px;background:#fff"></div>
<div class="abs" style="left:1673px;top:654px;width:1px;height:30px;background:#dcdcdc"></div>
<div class="abs" style="left:1785px;top:654px;width:1px;height:30px;background:#fff"></div>
<div class="abs" style="left:1786px;top:654px;width:1px;height:30px;background:#dcdcdc"></div>
<div class="t " style="left:255px;top:660px;color:#444">Сделка</div>
<div class="t " style="left:536px;top:660px;color:#444">ОбъектНедвижимости</div>
<div class="t " style="left:803px;top:660px;color:#444">РегистраторСделки</div>
<div class="t " style="left:1117px;top:660px;color:#444">Договор</div>
<div class="t " style="left:1230px;top:660px;color:#444">Воронка</div>
<div class="t " style="left:1343px;top:660px;color:#444">Этап</div>
<div class="t " style="left:1456px;top:660px;color:#444">Дата</div>
<div class="t " style="left:1569px;top:660px;color:#444">Клиент</div>
<div class="t " style="left:1682px;top:660px;color:#444">Сумма</div>
<div class="t " style="left:1795px;top:660px;color:#444">РольИсполнит..</div>
<div class="abs" style="left:247px;top:685px;width:1653px;height:281px;overflow:hidden">
<div class="t" style="left:29px;top:6px;color:#333;letter-spacing:-0.07px">Сделка 000000012632 от 13.10.2024 7...</div>
<div class="t" style="left:289px;top:6px;color:#333;letter-spacing:0.11px">Совушки Екатеринбург, 16.1, Парадна...</div>
<div class="t" style="left:983px;top:6px;color:#333;letter-spacing:0.08px">Основная во...</div>
<div class="t" style="left:1096px;top:6px;color:#333;letter-spacing:-0.1px">Убит</div>
<div class="t" style="left:1209px;top:6px;color:#333;letter-spacing:0px">28.02.2025 16...</div>
<div class="t" style="left:1322px;top:6px;color:#333;letter-spacing:0.07px">Евгений Ким</div>
<div class="t" style="left:1431px;top:6px;width:100px;text-align:right;color:#333">8 480 000,00</div>
<div class="abs" style="left:0;top:28px;width:1640px;height:1px;background:#e4e4e4"></div>
<div class="abs" style="left:0px;top:29px;width:279px;height:28px;background:#f2f2f2"></div>
<div class="abs" style="left:281px;top:29px;width:264px;height:28px;background:#f2f2f2"></div>
<div class="abs" style="left:547px;top:29px;width:312px;height:28px;background:#e6e6e6"></div>
<div class="abs" style="left:861px;top:29px;width:112px;height:28px;background:#f2f2f2"></div>
<div class="abs" style="left:975px;top:29px;width:111px;height:28px;background:#f2f2f2"></div>
<div class="abs" style="left:1088px;top:29px;width:111px;height:28px;background:#f2f2f2"></div>
<div class="abs" style="left:1201px;top:29px;width:111px;height:28px;background:#f2f2f2"></div>
<div class="abs" style="left:1314px;top:29px;width:111px;height:28px;background:#f2f2f2"></div>
<div class="abs" style="left:1427px;top:29px;width:111px;height:28px;background:#f2f2f2"></div>
<div class="abs" style="left:1540px;top:29px;width:99px;height:28px;background:#f2f2f2"></div>
<div class="t" style="left:29px;top:35px;color:#333;letter-spacing:-0.07px">Сделка 000000012461 от 11.10.2024 7:...</div>
<div class="t" style="left:289px;top:35px;color:#333;letter-spacing:0.11px">Совушки Екатеринбург, Таунхаус 11, к...</div>
<div class="t" style="left:983px;top:35px;color:#333;letter-spacing:0.08px">Основная во...</div>
<div class="t" style="left:1096px;top:35px;color:#333;letter-spacing:-0.1px">Убит</div>
<div class="t" style="left:1209px;top:35px;color:#333;letter-spacing:0px">28.02.2025 16...</div>
<div class="t" style="left:1322px;top:35px;color:#333;letter-spacing:0.07px">Получить+по...</div>
<div class="t" style="left:1431px;top:35px;width:100px;text-align:right;color:#333">11 170 000,00</div>
<div class="abs" style="left:0;top:57px;width:1640px;height:1px;background:#e4e4e4"></div>
<div class="t" style="left:29px;top:64px;color:#333;letter-spacing:-0.07px">Сделка 000000012379 от 10.10.2024 1...</div>
<div class="t" style="left:289px;top:64px;color:#333;letter-spacing:0.11px">Совушки Екатеринбург, ЗУ Квартал 2.2...</div>
<div class="t" style="left:556px;top:64px;color:#333;letter-spacing:-0.04px">Передаточный акт № б/н от 18.10.2024 (Подпи...</div>
<div class="t" style="left:870px;top:64px;color:#333;letter-spacing:0.12px">Договор (с по...</div>
<div class="t" style="left:983px;top:64px;color:#333;letter-spacing:0.08px">Основная во...</div>
<div class="t" style="left:1096px;top:64px;color:#333;letter-spacing:-0.1px">Контроль оплат</div>
<div class="t" style="left:1209px;top:64px;color:#333;letter-spacing:0px">18.10.2024 16...</div>
<div class="t" style="left:1322px;top:64px;color:#333;letter-spacing:0.07px">Кириченко Ра...</div>
<div class="t" style="left:1431px;top:64px;width:100px;text-align:right;color:#333">8 800 000,00</div>
<div class="abs" style="left:0;top:86px;width:1640px;height:1px;background:#e4e4e4"></div>
<div class="t" style="left:29px;top:93px;color:#333;letter-spacing:-0.07px">Сделка 000000011915 от 05.10.2024 1...</div>
<div class="t" style="left:289px;top:93px;color:#333;letter-spacing:0.11px">Маяк Курган, ГП 7, Парадная 10, кв. ...</div>
<div class="t" style="left:556px;top:93px;color:#333;letter-spacing:-0.04px">Перебронирование № 2 473 от 10.10.2024 на с...</div>
<div class="t" style="left:983px;top:93px;color:#333;letter-spacing:0.08px">Основная во...</div>
<div class="t" style="left:1209px;top:93px;color:#333;letter-spacing:0px">10.10.2024 18...</div>
<div class="t" style="left:1322px;top:93px;color:#333;letter-spacing:0.07px">Шевчук Светл...</div>
<div class="abs" style="left:0;top:115px;width:1640px;height:1px;background:#e4e4e4"></div>
<div class="t" style="left:29px;top:122px;color:#333;letter-spacing:-0.07px">Сделка 000000011836 от 04.10.2024 1...</div>
<div class="t" style="left:556px;top:122px;color:#333;letter-spacing:-0.04px">Бронь № 2 440 от 06.10.2024 на сумму 12 800 ...</div>
<div class="t" style="left:983px;top:122px;color:#333;letter-spacing:0.08px">Основная во...</div>
<div class="t" style="left:1096px;top:122px;color:#333;letter-spacing:-0.1px">Убит</div>
<div class="t" style="left:1209px;top:122px;color:#333;letter-spacing:0px">06.10.2024 17...</div>
<div class="t" style="left:1322px;top:122px;color:#333;letter-spacing:0.07px">Юлия</div>
<div class="t" style="left:1431px;top:122px;width:100px;text-align:right;color:#333">12 800 000,00</div>
<div class="abs" style="left:0;top:144px;width:1640px;height:1px;background:#e4e4e4"></div>
<div class="t" style="left:29px;top:151px;color:#333;letter-spacing:-0.07px">Сделка 000000011753 от 04.10.2024 7:...</div>
<div class="t" style="left:556px;top:151px;color:#333;letter-spacing:-0.04px">Бронь № 2 419 от 03.10.2024 на сумму 8 130 000</div>
<div class="t" style="left:983px;top:151px;color:#333;letter-spacing:0.08px">Основная во...</div>
<div class="t" style="left:1096px;top:151px;color:#333;letter-spacing:-0.1px">Убит</div>
<div class="t" style="left:1209px;top:151px;color:#333;letter-spacing:0px">03.10.2024 12...</div>
<div class="t" style="left:1322px;top:151px;color:#333;letter-spacing:0.07px">Логиновских ...</div>
<div class="t" style="left:1431px;top:151px;width:100px;text-align:right;color:#333">8 130 000,00</div>
<div class="abs" style="left:0;top:173px;width:1640px;height:1px;background:#e4e4e4"></div>
<div class="t" style="left:29px;top:180px;color:#333;letter-spacing:-0.07px">Сделка 000000011458 от 01.10.2024 1...</div>
<div class="t" style="left:289px;top:180px;color:#333;letter-spacing:0.11px">Совушки Екатеринбург, ГП1, Парадная...</div>
<div class="t" style="left:983px;top:180px;color:#333;letter-spacing:0.08px">Основная во...</div>
<div class="t" style="left:1096px;top:180px;color:#333;letter-spacing:-0.1px">Убит</div>
<div class="t" style="left:1209px;top:180px;color:#333;letter-spacing:0px">28.02.2025 16...</div>
<div class="t" style="left:1322px;top:180px;color:#333;letter-spacing:0.07px">Куликова Лар...</div>
<div class="t" style="left:1431px;top:180px;width:100px;text-align:right;color:#333">6 650 000,00</div>
<div class="abs" style="left:0;top:202px;width:1640px;height:1px;background:#e4e4e4"></div>
<div class="t" style="left:29px;top:209px;color:#333;letter-spacing:-0.07px">Сделка 000000011422 от 01.10.2024 1...</div>
<div class="t" style="left:556px;top:209px;color:#333;letter-spacing:-0.04px">Новое обращение 4Д-000586 от 01.10.2024 16:...</div>
<div class="t" style="left:983px;top:209px;color:#333;letter-spacing:0.08px">Основная во...</div>
<div class="t" style="left:1096px;top:209px;color:#333;letter-spacing:-0.1px">Убит</div>
<div class="t" style="left:1209px;top:209px;color:#333;letter-spacing:0px">20.10.2024 16...</div>
<div class="t" style="left:1322px;top:209px;color:#333;letter-spacing:0.07px">Сергей</div>
<div class="abs" style="left:0;top:231px;width:1640px;height:1px;background:#e4e4e4"></div>
<div class="t" style="left:29px;top:238px;color:#333;letter-spacing:-0.07px">Сделка 000000010192 от 24.09.2024 1...</div>
<div class="t" style="left:556px;top:238px;color:#333;letter-spacing:-0.04px">Бронь № 2 334 от 24.09.2024 на сумму 7 800 0...</div>
<div class="t" style="left:983px;top:238px;color:#333;letter-spacing:0.08px">Основная во...</div>
<div class="t" style="left:1096px;top:238px;color:#333;letter-spacing:-0.1px">Убит</div>
<div class="t" style="left:1209px;top:238px;color:#333;letter-spacing:0px">24.09.2024 12...</div>
<div class="t" style="left:1322px;top:238px;color:#333;letter-spacing:0.07px">Галина</div>
<div class="t" style="left:1431px;top:238px;width:100px;text-align:right;color:#333">7 800 000,00</div>
<div class="abs" style="left:0;top:260px;width:1640px;height:1px;background:#e4e4e4"></div>
<div class="t" style="left:29px;top:267px;color:#333;letter-spacing:-0.07px">Сделка 000000010005 от 20.09.2024 1...</div>
<div class="t" style="left:289px;top:267px;color:#333;letter-spacing:0.11px">Совушки Екатеринбург, 16.1, Парадна...</div>
<div class="t" style="left:983px;top:267px;color:#333;letter-spacing:0.08px">Основная во...</div>
<div class="t" style="left:1096px;top:267px;color:#333;letter-spacing:-0.1px">Убит</div>
<div class="t" style="left:1209px;top:267px;color:#333;letter-spacing:0px">28.02.2025 16...</div>
<div class="t" style="left:1322px;top:267px;color:#333;letter-spacing:0.07px">Андреева Ол...</div>
<div class="t" style="left:1431px;top:267px;width:100px;text-align:right;color:#333">6 370 000,00</div>
<div class="abs" style="left:0;top:289px;width:1640px;height:1px;background:#e4e4e4"></div>
</div>
<svg style="left:1890px;top:663px" width="6" height="4" viewBox="0 0 6 4"><path d="M0 4h6l-3-4z" fill="#444"/></svg>
<div class="abs" style="left:1889px;top:677px;width:8px;height:265px;background:#d6d6d6;border-radius:4px"></div>
<div class="abs" style="left:1889px;top:795px;width:8px;height:18px;background:#8c8c8c;border-radius:4px"></div>
<svg style="left:1890px;top:952px" width="6" height="4" viewBox="0 0 6 4"><path d="M0 0h6l-3 4z" fill="#444"/></svg>
<svg style="left:257px;top:968px" width="5" height="7" viewBox="0 0 5 7"><path d="M5 0v7l-5-3.500z" fill="#c6c6c6"/></svg>
<div class="abs" style="left:270px;top:968px;width:1593px;height:8px;background:#d6d6d6;border-radius:4px"></div>
<div class="abs" style="left:270px;top:968px;width:474px;height:8px;background:#a3a3a3;border-radius:4px"></div>
<svg style="left:1872px;top:968px" width="5" height="7" viewBox="0 0 5 7"><path d="M0 0v7l5-3.500z" fill="#444"/></svg>
<div class="abs" style="left:0px;top:992px;width:1920px;height:40px;background:linear-gradient(90deg,#04070b 0%,#060c14 35%,#0b1826 70%,#0e1d2e 100%)"></div>
<div class="abs" style="left:245px;top:992px;width:44px;height:40px;background:#2f3237"></div>
<div class="abs" style="left:289px;top:992px;width:4px;height:40px;background:#3b3e43"></div>
<div class="abs" style="left:245px;top:1030px;width:48px;height:2px;background:#7fbdf0"></div>
<div class="abs" style="left:151px;top:1030px;width:40px;height:2px;background:#7fbdf0"></div>
<svg style="left:16px;top:1004px" width="17" height="17" viewBox="0 0 17 17"><path d="M0 2.300l6.800-1v6.700H0zM7.700 1.200L16.500 0v8H7.700zM0 8.900h6.800v6.700l-6.800-1zM7.700 8.900h8.800v8l-8.800-1.200z" fill="#fff"/></svg>
<svg style="left:63px;top:1002px" width="19" height="19" viewBox="0 0 19 19"><circle cx="11.500" cy="7.500" r="5.500" fill="none" stroke="#fff" stroke-width="1.300"/><path d="M7.500 11.500L1 18" stroke="#fff" stroke-width="1.500"/></svg>
<svg style="left:111px;top:1004px" width="17" height="15" viewBox="0 0 17 15"><rect x="2" y="3.500" width="9.500" height="8" fill="none" stroke="#fff" stroke-width="1.200"/><path d="M2 0.600h9.500M2 14.400h9.500" stroke="#fff" stroke-width="1.200"/><path d="M15.500 0v3.500M15.500 5.500v2.500M15.500 10v5" stroke="#fff" stroke-width="1.300"/><path d="M2 0v1.500M11.500 0v1.500M2 13.500v1.500M11.500 13.500v1.500" stroke="#fff" stroke-width="1.200"/></svg>
<svg style="left:160px;top:1003px" width="22" height="18" viewBox="0 0 22 18"><path d="M0.500 1.500h7l1.500 1.500h12.500v14.500h-21z" fill="#f5cf62"/><path d="M0.500 4.500h21v13h-21z" fill="#fbe08c"/><path d="M1 1.500h6.500v1h-6.500z" fill="#e9b93a"/><path d="M5 17.500v-5.500a1 1 0 0 1 1-1h10a1 1 0 0 1 1 1v5.500h-3.500v-3.500h-5v3.500z" fill="#2d8fe0"/><rect x="2" y="2" width="1.500" height="0.800" fill="#3a9e4a"/></svg>
<svg style="left:208px;top:1000px" width="24" height="24" viewBox="0 0 24 24"><path d="M3.500 13.200a8.800 8.800 0 1 1 17.500 1.300H8.300a4.300 4.300 0 0 0 7.800 1.300h4.400A8.800 8.800 0 0 1 3.500 13.200z M8.400 11.200h7.800a4 4 0 0 0-7.800 0z" fill="#35b4f2" fill-rule="evenodd"/><path d="M20 5.800c1.800-2.400 1.200-4.200-1.600-3.800-3.600.5-9.500 4-13.500 9.200-3.400 4.500-4.300 8.500-2.700 9.800 1.500 1.200 4.300.3 6.800-1.300" fill="none" stroke="#f2b810" stroke-width="1.600"/></svg>
<svg style="left:257px;top:1000px" width="24" height="24" viewBox="0 0 24 24"><defs><radialGradient id="g1c" cx="0.450" cy="0.350" r="0.750"><stop offset="0" stop-color="#ffe64a"/><stop offset="1" stop-color="#f7c10c"/></radialGradient></defs><circle cx="12" cy="11.800" r="12" fill="url(#g1c)"/><path d="M4.300 9.300l2-1.900v8" fill="none" stroke="#e0241c" stroke-width="1.700"/><path d="M14.800 8.600a3.700 3.700 0 1 0-3 6.100h8.200" fill="none" stroke="#e0241c" stroke-width="1.200"/><path d="M13.600 10.200a1.900 1.900 0 1 0-1.800 2.600h8.200" fill="none" stroke="#e0241c" stroke-width="1"/></svg>
<svg style="left:306px;top:1000px" width="26" height="25" viewBox="0 0 26 25"><ellipse cx="12.500" cy="11" rx="10.500" ry="6.500" transform="rotate(-18 12.500 11)" fill="#f6f6f6" stroke="#d03a3a" stroke-width="1.300"/><path d="M3 15.500c3 3 8 3.500 11.500 2l-1-3.500c-3 1-7 1-10.500 1.500z" fill="#6a6a6a"/><path d="M10.500 4l5.500 13M17 4l-5 12.500" stroke="#8a8a8a" stroke-width="1"/><circle cx="16" cy="20.500" r="2.200" fill="none" stroke="#2a9be8" stroke-width="1.600"/><circle cx="21.500" cy="16" r="2.200" fill="none" stroke="#2a9be8" stroke-width="1.600"/><path d="M13 13.500l2.500 5.500M14.500 13l5.500 2.500" stroke="#2a9be8" stroke-width="1.600"/></svg>
<svg style="left:355px;top:1000px" width="24" height="24" viewBox="0 0 24 24"><defs><linearGradient id="gy" x1="0" y1="1" x2="1" y2="0"><stop offset="0" stop-color="#ff3a2a"/><stop offset="0.600" stop-color="#ff3a5a"/><stop offset="1" stop-color="#f04ad8"/></linearGradient></defs><circle cx="12" cy="11.800" r="12" fill="#fff"/><path d="M5.300 5.500l6.700 7.500" fill="none" stroke="#ff5a1f" stroke-width="3"/><path d="M12 21v-8" fill="none" stroke="#ff3a2a" stroke-width="3"/><path d="M12 13l6.700-7.500" fill="none" stroke="url(#gy)" stroke-width="3"/></svg>
<svg style="left:1698px;top:1007px" width="14" height="8" viewBox="0 0 14 8"><path d="M0.500 7.500l6.500-6.500 6.500 6.500" fill="none" stroke="#fff" stroke-width="1.300"/></svg>
<svg style="left:1721px;top:1005px" width="17" height="15" viewBox="0 0 17 15"><rect x="3.500" y="1" width="12.500" height="8.500" fill="none" stroke="#fff" stroke-width="1.100"/><path d="M9.500 9.500v3.500M6 13.500h8" stroke="#fff" stroke-width="1.100"/><rect x="0.500" y="0.500" width="4" height="3.500" fill="#0c1826" stroke="#fff" stroke-width="0.900"/><path d="M2.500 4v7.500h2" fill="none" stroke="#fff" stroke-width="0.900"/></svg>
<svg style="left:1745px;top:1004px" width="20" height="17" viewBox="0 0 20 17"><path d="M0.800 6.500h2.500l3.700-4v12l-3.700-4H0.800z" fill="none" stroke="#fff" stroke-width="1"/><circle cx="12.500" cy="12.500" r="5" fill="#e81123"/><path d="M10.700 10.700l3.600 3.600M14.300 10.700l-3.600 3.600" stroke="#fff" stroke-width="1.100"/></svg>
<div class="t" style="left:1772px;top:1004px;color:#fff;font-size:12px;line-height:15px;letter-spacing:-0.300px">РУС</div>
<div class="t" style="left:1821px;top:995px;color:#fff;font-size:12px;line-height:15px;letter-spacing:-0.200px">4:01</div>
<div class="t" style="left:1806px;top:1013px;color:#fff;font-size:12px;line-height:15px;letter-spacing:-0.350px">14.04.2026</div>
<svg style="left:1879px;top:1004px" width="17" height="17" viewBox="0 0 17 17"><path d="M0.600 0.600h15.800v11.800h-5l-3 3-3-3h-4.800z" fill="none" stroke="#fff" stroke-width="1.200"/></svg>
<div class="abs" style="left:1915px;top:992px;width:1px;height:40px;background:#5a6470"></div>
</body></html>
